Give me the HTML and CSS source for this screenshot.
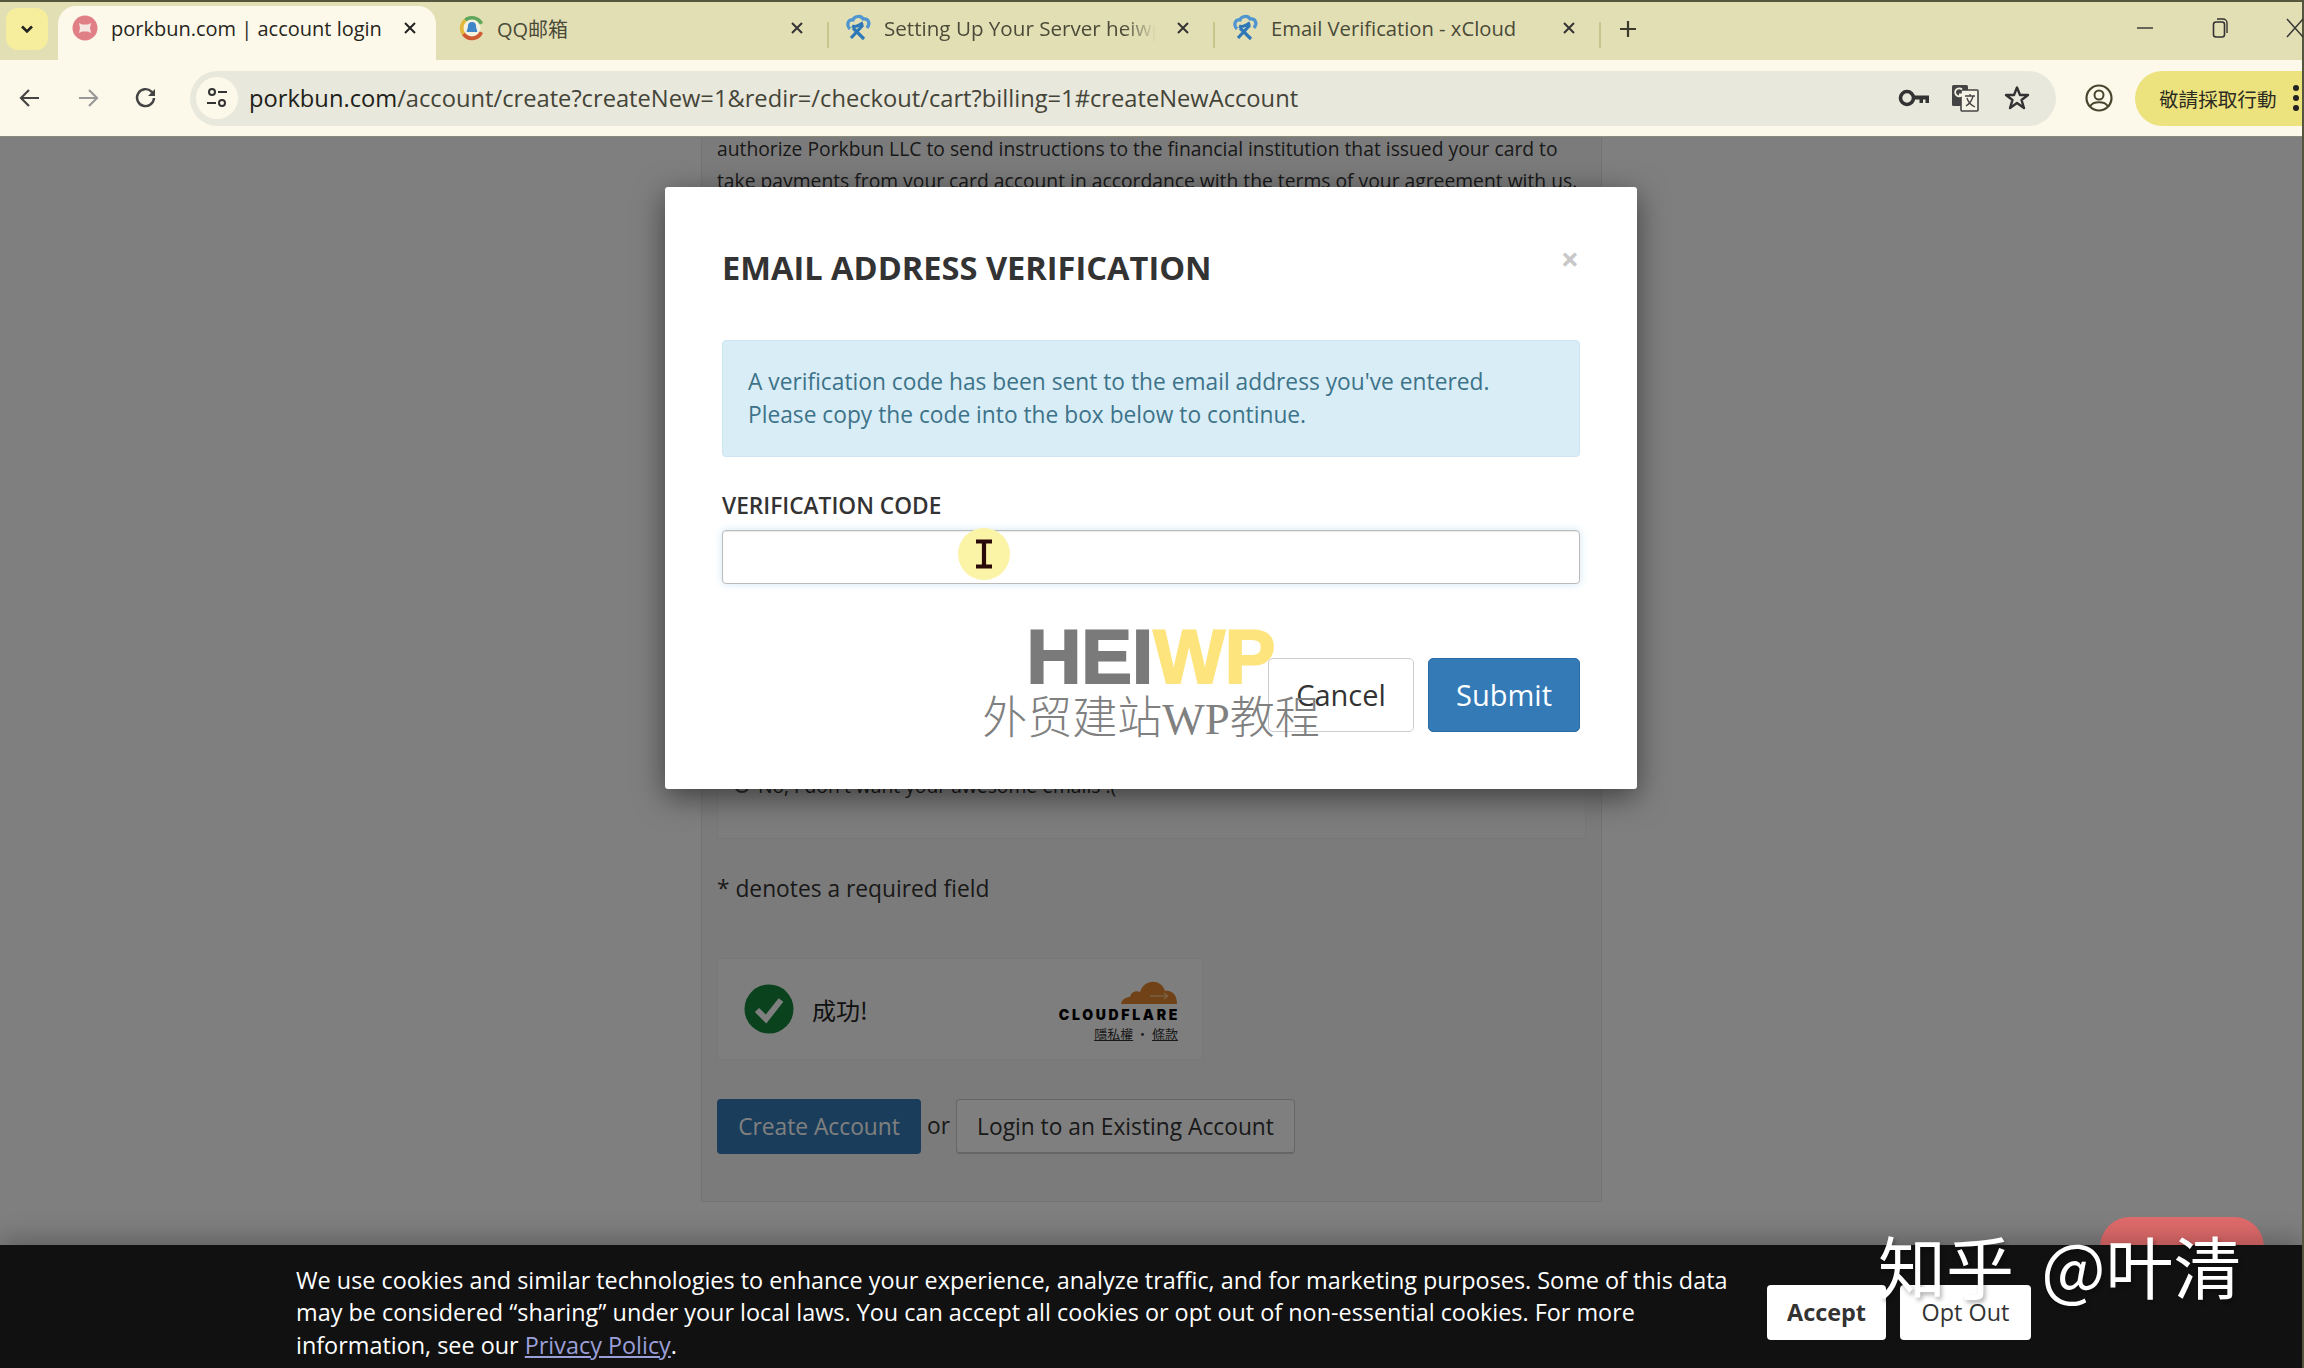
FILE: index.html
```html
<!DOCTYPE html>
<html lang="en">
<head>
<meta charset="utf-8">
<title>porkbun.com | account login</title>
<link rel="stylesheet" href="styles.css">
</head>
<body>
<div class="window">
  <header class="tabstrip">
    <button class="tab-search"><svg width="16" height="16" viewBox="0 0 16 16"><path d="M3 5.5 8 10.5 13 5.5" fill="none" stroke="#222" stroke-width="2.6"/></svg></button>
    <div class="tab tab-active">
      <svg class="fav" width="26" height="26" viewBox="0 0 26 26"><circle cx="13" cy="13" r="12.5" fill="#e07f86"/><path d="M7 8 10 9.5H16L19 8 18 13 19 18 16 16.5H10L7 18 8 13Z" fill="#f6e6e2"/></svg>
      <span class="tab-title">porkbun.com | account login</span>
      <svg class="tab-x" width="14" height="14" viewBox="0 0 14 14"><path d="M2 2 12 12M12 2 2 12" stroke="#222" stroke-width="2"/></svg>
    </div>
    <div class="tab tab-qq">
      <svg class="fav" width="28" height="28" viewBox="0 0 28 28"><path d="M6 5A12 12 0 0 1 25 9L21 11A8 8 0 0 0 9 8Z" fill="#5fa55a"/><path d="M6 5A12 12 0 0 0 4 21L8 18A8 8 0 0 1 9 8Z" fill="#e2b93b"/><path d="M4 21A12 12 0 0 0 25 19L21 17A8 8 0 0 1 8 18Z" fill="#cf5a32"/><circle cx="14" cy="14" r="8.5" fill="#f4f2de"/><path d="M14 8A4 4 0 0 1 18 12C18 15 20 17 19 18H9C8 17 10 15 10 12A4 4 0 0 1 14 8Z" fill="#3f86c8"/></svg>
      <span class="tab-title tab-dim">QQ邮箱</span>
      <svg class="tab-x" width="14" height="14" viewBox="0 0 14 14"><path d="M2 2 12 12M12 2 2 12" stroke="#333" stroke-width="2"/></svg>
    </div>
    <div class="tab tab-server">
      <svg class="fav" width="28" height="28" viewBox="0 0 28 28"><use href="#xcloud"/></svg>
      <span class="tab-title tab-dim tab-fade">Setting Up Your Server heiwp</span>
      <svg class="tab-x" width="14" height="14" viewBox="0 0 14 14"><path d="M2 2 12 12M12 2 2 12" stroke="#333" stroke-width="2"/></svg>
    </div>
    <div class="tab tab-email">
      <svg class="fav" width="28" height="28" viewBox="0 0 28 28"><use href="#xcloud"/></svg>
      <span class="tab-title tab-dim">Email Verification - xCloud</span>
      <svg class="tab-x" width="14" height="14" viewBox="0 0 14 14"><path d="M2 2 12 12M12 2 2 12" stroke="#333" stroke-width="2"/></svg>
    </div>
    <svg class="newtab" width="18" height="18" viewBox="0 0 18 18"><path d="M9 1V17M1 9H17" stroke="#3b3b2c" stroke-width="2.2"/></svg>
    <div class="winctl">
      <svg width="18" height="18" viewBox="0 0 18 18"><path d="M1 9H17" stroke="#333" stroke-width="1.4"/></svg>
      <svg width="18" height="24" viewBox="0 0 18 24"><rect x="2.5" y="6" width="11" height="15" rx="2.5" fill="none" stroke="#333" stroke-width="1.6"/><path d="M6 3H12A4 4 0 0 1 16 7V17" fill="none" stroke="#333" stroke-width="1.4"/></svg>
      <svg width="18" height="20" viewBox="0 0 18 20"><path d="M1 1 17 19M17 1 1 19" stroke="#333" stroke-width="1.4"/></svg>
    </div>
  </header>

  <svg class="defs" width="0" height="0"><defs>
    <g id="xcloud">
      <path d="M6 15C2 11 4 5 9 6C10 2 17 1 19 5C24 4 27 9 23 14" fill="none" stroke="#4f95d0" stroke-width="3.2"/>
      <path d="M8 12C12 14 15 11 19 9M7 24 19 11M9 14 20 25" fill="none" stroke="#2f78b8" stroke-width="3.2"/>
    </g>
  </defs></svg>

  <nav class="toolbar">
    <svg class="nav-ic" width="24" height="24" viewBox="0 0 24 24"><path d="M21 12H4M11 4 3 12 11 20" fill="none" stroke="#444" stroke-width="2.2"/></svg>
    <svg class="nav-ic" width="24" height="24" viewBox="0 0 24 24"><path d="M3 12H20M13 4 21 12 13 20" fill="none" stroke="#999" stroke-width="2.2"/></svg>
    <svg class="nav-ic" width="24" height="24" viewBox="0 0 24 24"><path d="M20 12A8.5 8.5 0 1 1 17.5 5.6L20 8" fill="none" stroke="#444" stroke-width="2.4"/><path d="M21 3V10H14Z" fill="#444"/></svg>
    <div class="omnibox">
      <span class="site-info"><svg width="22" height="22" viewBox="0 0 22 22"><circle cx="6" cy="5" r="3" fill="none" stroke="#333" stroke-width="2"/><path d="M12 5H21M1 16H10" stroke="#333" stroke-width="2.2"/><circle cx="16" cy="16" r="3" fill="none" stroke="#333" stroke-width="2"/></svg></span>
      <span class="url">porkbun.com<span class="url-rest">/account/create?createNew=1&amp;redir=/checkout/cart?billing=1#createNewAccount</span></span>
      <span class="omni-icons">
        <svg width="32" height="24" viewBox="0 0 32 24"><circle cx="9" cy="12" r="6.5" fill="none" stroke="#333" stroke-width="3.6"/><path d="M15 9.500H31V17H27.500V13.500H25V17H21.500V13.500H15Z" fill="#333"/></svg>
        <svg class="ic-translate" width="28" height="28" viewBox="0 0 28 28"><rect x="1" y="1" width="16" height="21" rx="1.5" fill="#444"/><rect x="10" y="6" width="17" height="21" rx="1" fill="#f5f3e6" stroke="#444" stroke-width="1.6"/><path d="M14 12H24M19 10V12M22 12C21 17 18 20 15 22M16 14C17 18 20 21 24 23" fill="none" stroke="#444" stroke-width="1.3"/><path d="M11 5.500A4 4 0 1 0 11.500 10.500H8" fill="none" stroke="#f5f3e6" stroke-width="1.800"/></svg>
        <svg width="26" height="26" viewBox="0 0 26 26"><path d="M13 2.500 16 10H24L17.500 15 20 23 13 18 6 23 8.500 15 2 10H10Z" fill="none" stroke="#333" stroke-width="2.4" stroke-linejoin="round"/></svg>
      </span>
    </div>
    <svg class="profile" width="28" height="28" viewBox="0 0 28 28"><circle cx="14" cy="14" r="12.500" fill="none" stroke="#46462e" stroke-width="2.200"/><circle cx="14" cy="11" r="4.500" fill="none" stroke="#46462e" stroke-width="2"/><path d="M5.500 22C8 17 20 17 22.500 22" fill="none" stroke="#46462e" stroke-width="2"/></svg>
    <div class="action-pill"><span>敬請採取行動</span><svg width="8" height="28" viewBox="0 0 8 28"><circle cx="4" cy="4" r="3" fill="#222"/><circle cx="4" cy="14" r="3" fill="#222"/><circle cx="4" cy="24" r="3" fill="#222"/></svg></div>
  </nav>

  <main class="page">
    <section class="panel">
      <p class="terms">authorize Porkbun LLC to send instructions to the financial institution that issued your card to<br>take payments from your card account in accordance with the terms of your agreement with us.</p>
      <div class="well"><label class="radio-line"><span class="radio"></span>No, I don't want your awesome emails :(</label></div>
      <p class="required">* denotes a required field</p>
      <div class="turnstile">
        <svg class="ok" width="50" height="50" viewBox="0 0 50 50"><circle cx="25" cy="25" r="24.500" fill="#12843a"/><path d="M13 26 22 35 37 16" fill="none" stroke="#fff" stroke-width="6"/></svg>
        <span class="ok-text">成功!</span>
        <div class="cf">
          <svg width="58" height="30" viewBox="0 0 58 30"><path d="M1 29C2 24 6 22 10 22C11 17 16 15 20 17C24 4 41 3 45 16C52 15 57 20 57 29Z" fill="#e2852e"/><path d="M30 21H48M48 21 44 18M48 21 44 24" stroke="#f3c083" stroke-width="1.300" fill="none"/></svg>
          <strong class="cf-name">CLOUDFLARE</strong>
          <span class="cf-links"><u>隱私權</u> • <u>條款</u></span>
        </div>
      </div>
      <div class="actions">
        <a class="btn btn-create">Create Account</a>
        <span class="or">or</span>
        <a class="btn btn-login">Login to an Existing Account</a>
      </div>
    </section>

    <div class="backdrop">
      <div class="modal">
        <div class="modal-head">
          <h2>EMAIL ADDRESS VERIFICATION</h2>
          <span class="modal-x">×</span>
        </div>
        <div class="alert">A verification code has been sent to the email address you've entered.<br>Please copy the code into the box below to continue.</div>
        <label class="field-label" for="code">VERIFICATION CODE</label>
        <div class="input-wrap">
          <input id="code" class="field-input" type="text">
          <span class="cursor-glow">
            <svg width="20" height="30" viewBox="0 0 20 30"><path d="M2 2.500H18M2 27.500H18M10 2.500V27.500" fill="none" stroke="#2b0a0a" stroke-width="4.200"/></svg>
          </span>
        </div>
        <div class="modal-foot">
          <button class="mbtn mbtn-cancel">Cancel</button>
          <button class="mbtn mbtn-submit">Submit</button>
          <div class="wm-site"><div class="wm-logo">HEI<span>WP</span></div><div class="wm-sub">外贸建站<span>WP</span>教程</div></div>
        </div>
      </div>
    </div>

    <div class="chat-pill"></div>
    <aside class="cookie">
      <p class="cookie-text">We use cookies and similar technologies to enhance your experience, analyze traffic, and for marketing purposes. Some of this data<br>may be considered “sharing” under your local laws. You can accept all cookies or opt out of non-essential cookies. For more<br>information, see our <a>Privacy Policy</a>.</p>
      <button class="cbtn cbtn-accept">Accept</button>
      <button class="cbtn">Opt Out</button>
    </aside>
    <div class="zhihu">知乎 @叶清</div>
  </main>
</div>
</body>
</html>
```
FILE: styles.css
```css
* { box-sizing: border-box; }
html, body { margin: 0; padding: 0; }
body { width: 2304px; height: 1368px; overflow: hidden; background: #fff; font-family: "Open Sans", "Noto Sans CJK SC", sans-serif; }
.window { display: flex; flex-direction: column; height: 1368px; border-right: 2px solid #55553f; }
.defs { position: absolute; }

.tabstrip { display: flex; align-items: flex-end; height: 60px; flex: none; background: #e3dfb5; border-top: 2px solid #56563c; position: relative; }
.tab-search { align-self: flex-start; margin: 6px 10px 0 6px; width: 42px; height: 42px; border: 0; border-radius: 12px; background: #f6ee9d; display: flex; align-items: center; justify-content: center; padding: 0; flex: none; }
.tab { display: flex; align-items: center; height: 54px; padding-bottom: 10px; flex: none; position: relative; }
.tab-title { font-size: 20px; white-space: nowrap; font-family: "Open Sans", "Noto Sans CJK SC", sans-serif; color: #26261d; }
.tab-dim { color: #4a4a38; }
.tab-x { flex: none; }
.tab-active { width: 378px; background: #fdf9ea; border-radius: 18px 18px 0 0; padding-left: 14px; }
.tab-active .tab-title { margin-left: 13px; width: 272px; }
.tab-active .tab-x { margin-left: 20px; }
.tab-qq { width: 392px; padding-left: 22px; }
.tab-qq .tab-title { margin-left: 11px; width: 282px; }
.tab-qq .tab-x { margin-left: 11px; }
.tab-server { width: 386px; padding-left: 16px; }
.tab-server .tab-title { margin-left: 12px; width: 272px; overflow: hidden; font-size: 20.6px; -webkit-mask-image: linear-gradient(90deg, #000 88%, transparent 100%); mask-image: linear-gradient(90deg, #000 88%, transparent 100%); }
.tab-server .tab-x { margin-left: 20px; }
.tab-email { width: 387px; padding-left: 17px; }
.tab-email .tab-title { margin-left: 12px; width: 284px; font-size: 20.2px; }
.tab-email .tab-x { margin-left: 7px; }
.tab-server::before, .tab-email::before, .tab-email::after { content: ""; position: absolute; top: 16px; width: 2px; height: 26px; background: #c9c68c; }
.tab-server::before { left: -1px; }
.tab-email::before { left: -1px; }
.tab-email::after { right: 0; }
.newtab { align-self: flex-start; margin: 18px 0 0 18px; flex: none; }
.winctl { margin-left: auto; align-self: flex-start; margin-top: 14px; display: flex; align-items: center; gap: 57px; transform: translateX(2px); }

.toolbar { display: flex; align-items: center; height: 77px; flex: none; background: #fdf9ea; border-bottom: 1px solid #8c8c7d; padding-left: 18px; overflow: hidden; }
.nav-ic { flex: none; margin-right: 34px; }
.omnibox { display: flex; align-items: center; flex: none; width: 1866px; height: 55px; margin-left: -2px; border-radius: 28px; background: #e9e8dd; padding-left: 6px; }
.site-info { width: 42px; height: 42px; border-radius: 50%; background: #fdf9ea; display: flex; align-items: center; justify-content: center; flex: none; }
.url { margin-left: 11px; font-size: 23.7px; color: #202018; white-space: nowrap; }
.url-rest { color: #444438; }
.omni-icons { margin-left: auto; display: flex; align-items: center; gap: 22px; padding-right: 26px; }
.ic-translate { margin: 0 3px 0 -1px; }
.profile { flex: none; margin-left: 29px; }
.action-pill { display: flex; align-items: center; gap: 15px; flex: none; height: 55px; width: 190px; margin-left: 22px; padding-left: 24px; background: #ece27e; border-radius: 28px 0 0 28px; font: 19.600px "Noto Sans CJK TC", sans-serif; color: #2c2c22; white-space: nowrap; }
.action-pill svg { flex: none; }

.page { position: relative; flex: 1; overflow: hidden; background: #fff; }
.panel { width: 901px; height: 1069px; margin-left: 701px; background: #f7f7f7; border: 1px solid #e8e8e8; border-top: 0; padding: 0 15px; }
.terms { margin: -4px 0 0; font-size: 19.300px; line-height: 32px; color: #333; white-space: nowrap; }
.well { height: 67px; margin-top: 575px; background: #fbfbfb; border: 1px solid #eee; border-top: 0; padding-left: 16px; }
.radio-line { display: block; font-size: 19.300px; color: #333; }
.radio { display: inline-block; width: 16px; height: 16px; border: 2px solid #555; border-radius: 50%; margin-right: 8px; }
.required { margin: 35px 0 0; font-size: 22.750px; line-height: 30px; color: #333; }
.turnstile { display: flex; align-items: center; width: 486px; height: 102px; margin-top: 54px; padding: 0 24px 0 26px; background: #fdfdfd; border: 1px solid #f0f0f0; }
.ok { flex: none; }
.ok-text { margin-left: 18px; font: 24px "Noto Sans CJK TC", sans-serif; color: #222; }
.cf { margin-left: auto; display: flex; flex-direction: column; align-items: flex-end; }
.cf-name { font: 900 14px "Inter", sans-serif; letter-spacing: 2.700px; color: #000; margin-top: 1px; line-height: 18px; margin-right: -2px; }
.cf-links { font: 13px "Noto Sans CJK TC", sans-serif; color: #333; line-height: 20px; }
.actions { display: flex; align-items: center; margin-top: 39px; font-size: 22.750px; }
.btn { display: flex; align-items: center; justify-content: center; height: 55px; border-radius: 4px; }
.btn-create { width: 204px; background: #337ab7; color: #fff; }
.or { width: 35px; text-align: center; color: #333; margin-top: -3px; }
.btn-login { width: 339px; background: #fff; border: 1px solid #ccc; border-bottom-width: 2px; color: #333; }
.chat-pill { position: absolute; left: 2100px; top: 1080px; width: 164px; height: 60px; border-radius: 30px; background: #e06b6b; }

.backdrop { position: absolute; inset: 0; background: rgba(0, 0, 0, .5); display: flex; justify-content: center; padding: 50px 0 0; }
.modal { width: 972px; height: 602px; background: #fff; border-radius: 3px; box-shadow: 0 8px 30px rgba(0, 0, 0, .5); padding: 0 57px; }
.modal-head { display: flex; justify-content: space-between; height: 153px; padding-top: 57px; }
.modal-head h2 { margin: 0; font-size: 32.600px; font-weight: 700; line-height: 48px; color: #333; }
.modal-x { font-size: 32px; font-weight: 700; line-height: 30px; color: #c8c8c8; margin-right: 1px; }
.alert { height: 117px; padding: 24px 25px 0; background: #d9edf7; border: 1px solid #cfe6f2; border-radius: 4px; font-size: 22.750px; line-height: 33px; color: #3d7389; }
.field-label { display: block; margin-top: 32px; font-size: 22.700px; font-weight: 600; line-height: 33px; color: #333; }
.input-wrap { position: relative; margin-top: 8px; }
.field-input { display: block; width: 100%; height: 54px; background: #fff; border: 1px solid #bbb; border-radius: 4px; box-shadow: inset 0 1px 1px rgba(0, 0, 0, .08), 0 0 8px rgba(102, 175, 233, .3); outline: 0; }
.cursor-glow { position: absolute; left: 236px; top: -2px; width: 52px; height: 52px; border-radius: 50%; background: #fbf3a6; display: flex; align-items: center; justify-content: center; }
.modal-foot { position: relative; display: flex; justify-content: flex-end; gap: 14px; margin-top: 74px; }
.mbtn { height: 74px; border-radius: 5px; padding: 0 0 2px; font: 29px "Open Sans", sans-serif; }
.mbtn-cancel { width: 146px; background: #fff; border: 1px solid #ccc; color: #333; }
.mbtn-submit { width: 152px; background: #337ab7; border: 1px solid #2e6da4; color: #fff; }
.wm-site { position: absolute; left: 259px; top: -34px; width: 340px; text-align: center; pointer-events: none; }
.wm-logo { font: 700 76px/66px "Liberation Sans", sans-serif; color: #7a7a7a; -webkit-text-stroke: 2px currentColor; }
.wm-logo span { color: #fde47c; }
.wm-sub { font: 300 45px/50px "Noto Sans CJK SC", sans-serif; color: #808080; white-space: nowrap; }
.wm-sub span { font-family: "Liberation Serif", serif; }

.cookie { position: absolute; left: 0; right: 0; bottom: 0; height: 123px; background: #111; box-shadow: 0 -8px 22px rgba(0, 0, 0, .22); display: flex; align-items: flex-start; padding: 19px 0 0 296px; }
.cookie-text { margin: 0; width: 1471px; font-size: 23.400px; line-height: 32.300px; color: #fff; flex: none; }
.cookie-text a { color: #9a9fd8; text-decoration: underline; }
.cbtn { width: 131px; height: 55px; margin-top: 21px; margin-right: 14px; padding: 0 0 2px; background: #fff; border: 0; border-radius: 4px; font: 23.400px "Open Sans", sans-serif; color: #333; flex: none; }
.cbtn-accept { width: 119px; font-weight: 700; }
.zhihu { position: absolute; left: 1878px; top: 1087px; font: 68px/1.2 "Noto Sans CJK SC", sans-serif; word-spacing: 12px; color: #fff; text-shadow: 2px 3px 4px rgba(0, 0, 0, .3); white-space: nowrap; }
```
